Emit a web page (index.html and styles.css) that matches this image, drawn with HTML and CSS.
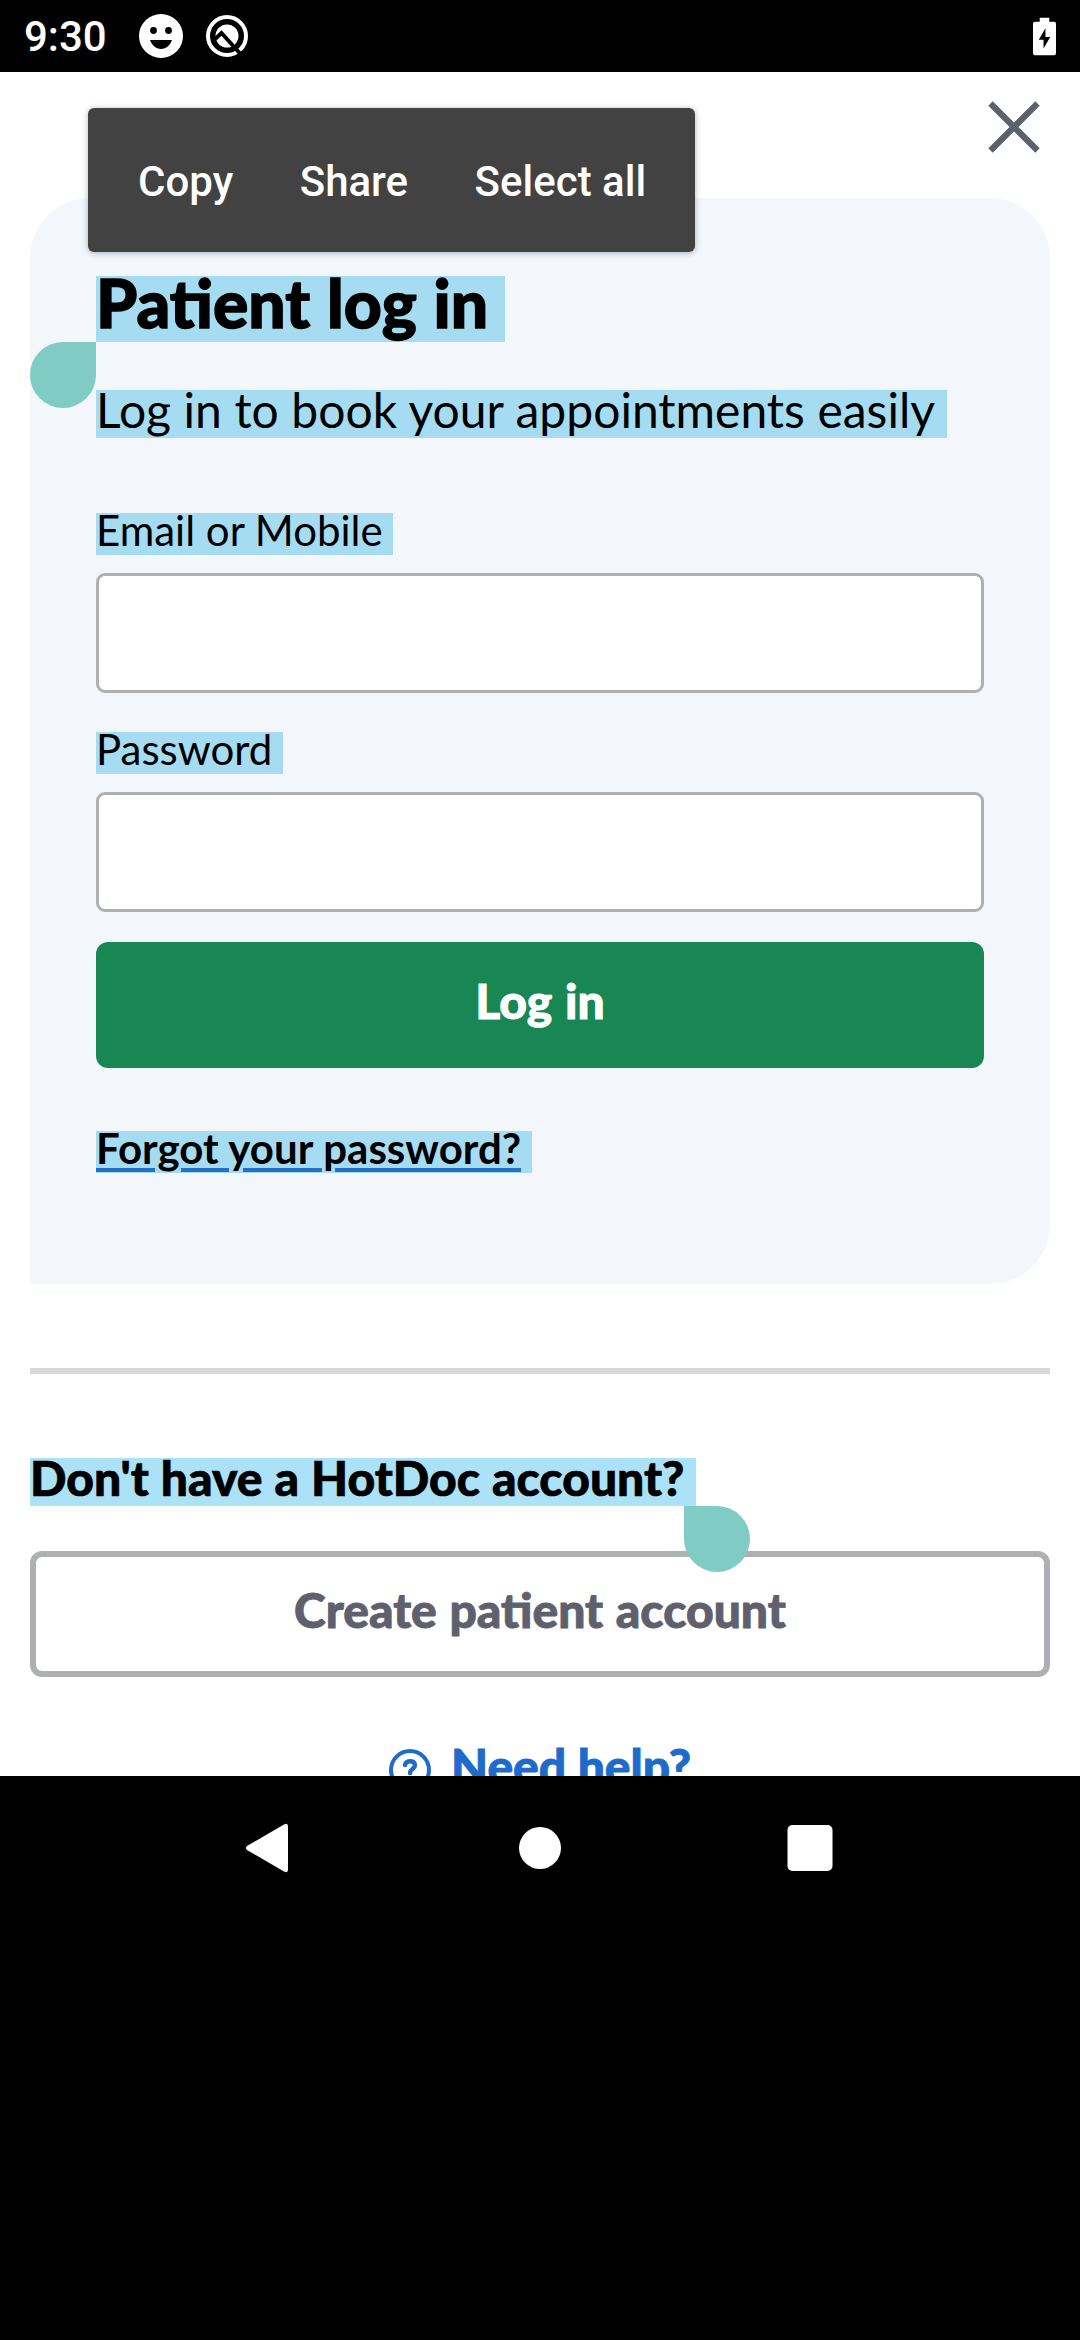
FILE: index.html
```html
<!DOCTYPE html>
<html lang="en">
<head>
<meta charset="utf-8">
<title>HotDoc – Patient log in</title>
<link rel="stylesheet" href="styles.css">
</head>
<body>
<header class="status-bar">
  <span class="clock">9:30</span>
  <svg class="smiley" viewBox="0 0 44 44"><circle cx="22" cy="22" r="22" fill="#fff"/><circle cx="14.500" cy="16.500" r="3.400"/><circle cx="29.500" cy="16.500" r="3.400"/><path d="M11 26h22c-1.600 5-6 9-11 9s-9.400-4-11-9z"/></svg>
  <svg class="q-icon" viewBox="0 0 44 44"><circle cx="22" cy="22" r="19" fill="none" stroke="#fff" stroke-width="4"/><circle cx="22" cy="22" r="11.500" fill="#fff"/><path d="M9.500 25.500 16.500 19 35.500 40" fill="none" stroke="#000" stroke-width="4"/></svg>
  <svg class="battery" viewBox="0 0 24 39"><path d="M7 0h10v4h5a2 2 0 0 1 2 2v31a2 2 0 0 1-2 2H2a2 2 0 0 1-2-2V6a2 2 0 0 1 2-2h5z" fill="#fff"/><path d="M13 11v9h5L11 32v-9H6z"/></svg>
</header>
<main class="page">
  <div class="top-row">
    <svg class="close" viewBox="0 0 52 52"><path d="M2.500 2.500l47 47M49.500 2.500l-47 47" stroke="#5e616d" stroke-width="6.200"/></svg>
  </div>
  <section class="card">
    <h1 class="title"><span class="selected">Patient log in</span><i class="handle handle-start"></i></h1>
    <p class="subtitle"><span class="selected">Log in to book your appointments easily</span></p>
    <label class="label"><span class="selected">Email or Mobile</span></label>
    <input class="field" type="text">
    <label class="label"><span class="selected">Password</span></label>
    <input class="field" type="password">
    <button class="button primary">Log in</button>
    <a class="forgot"><span class="selected"><span class="underlined">Forgot your password?</span></span></a>
  </section>
  <hr class="divider">
  <p class="question"><span class="selected">Don't have a HotDoc account?<i class="handle handle-end"></i></span></p>
  <button class="button outline">Create patient account</button>
  <a class="help">
    <svg class="help-icon" viewBox="0 0 42 42" fill="none" stroke="#1f6bcb"><circle cx="21" cy="21" r="19" stroke-width="4"/><path d="M16 16c.5-5 10-5 10 0 0 4-5 4-5 8" stroke-width="4.500" stroke-linecap="round"/><circle cx="21" cy="30" r="1" stroke-width="3"/></svg>
    <span>Need help?</span>
  </a>
</main>
<nav class="nav-bar">
  <svg viewBox="0 0 60 60"><path d="M7 28 44 6.500q4-2 4 2v43q0 4-4 2L7 32q-2-2 0-4z" fill="#fff"/></svg>
  <svg viewBox="0 0 60 60"><circle cx="30" cy="30" r="21" fill="#fff"/></svg>
  <svg viewBox="0 0 60 60"><rect x="7.500" y="7" width="45" height="46" rx="5" fill="#fff"/></svg>
</nav>
<div class="menu">
  <span>Copy</span><span>Share</span><span>Select all</span>
</div>
</body>
</html>
```
FILE: styles.css
```css
* { box-sizing: border-box; }

body {
  position: relative;
  width: 1080px;
  height: 2340px;
  margin: 0;
  overflow: hidden;
  background: #000;
  color: #000;
  font-family: Lato, sans-serif;
}

.status-bar {
  display: flex;
  align-items: center;
  height: 72px;
  padding: 0 24px;
}
.clock {
  width: 115px;
  color: #fff;
  font: 500 42px/72px Roboto, sans-serif;
  padding-top: 2px;
}
.smiley { width: 44px; height: 44px; }
.q-icon { width: 44px; height: 44px; margin-left: 22px; }
.battery { width: 23px; height: 39px; margin-left: auto; }

.page {
  display: flex;
  flex-direction: column;
  height: 1704px;
  padding: 0 30px;
  overflow: hidden;
  background: #fff;
}
.top-row {
  display: flex;
  flex: none;
  justify-content: flex-end;
  height: 126px;
  padding: 29px 10px 0 0;
}
.close { width: 52px; height: 52px; }

.card {
  display: flex;
  flex-direction: column;
  flex: none;
  height: 1086px;
  padding: 78px 66px 0;
  border-radius: 60px 60px 60px 0;
  background: #f3f7fc;
}

/* Selected runs are one em tall with the text sitting slightly high */
.selected {
  display: block;
  width: max-content;
  height: 1em;
  padding-right: .25em;
  background: #a6dcf2;
  line-height: .82em;
  white-space: nowrap;
}
.title, .subtitle, .question { margin: 0; }
.title {
  position: relative;
  height: 114px;
  font-size: 66px;
  font-weight: 900;
  line-height: 1;
  word-spacing: 1.2px;
  -webkit-text-stroke: 1.4px #000;
}
.subtitle { height: 123px; font-size: 48px; word-spacing: .3px; }
.label { height: 60px; font-size: 42px; }

.handle {
  position: absolute;
  width: 66px;
  height: 66px;
  background: #80cbc4;
}
.handle-start { top: 66px; left: -66px; border-radius: 33px 0 33px 33px; }
.handle-end { top: 48px; right: -54px; border-radius: 0 33px 33px 33px; }

.field {
  width: 100%;
  height: 120px;
  margin: 0 0 39px;
  border: 3px solid #aeb0b4;
  border-radius: 9px;
  background: #fff;
}
.button {
  flex: none;
  width: 100%;
  height: 126px;
  padding: 0 0 8px;
  border: 0;
  border-radius: 12px;
  font: 900 48px/1 Lato, sans-serif;
  word-spacing: 1.2px;
  -webkit-text-stroke: .9px currentColor;
}
.primary { margin-top: -9px; background: #198754; color: #fff; }

.forgot { margin-top: 63px; font-size: 42px; font-weight: 700; word-spacing: .6px; }
.underlined {
  text-decoration: underline;
  text-decoration-color: #2470c8;
  text-decoration-thickness: 4px;
  text-underline-offset: 4px;
}

.divider {
  flex: none;
  width: 100%;
  height: 6px;
  margin: 84px 0;
  border: 0;
  background: #d8d8d8;
}
.question {
  flex: none;
  height: 93px;
  font-size: 48px;
  font-weight: 900;
  word-spacing: .6px;
  -webkit-text-stroke: .7px #000;
}
.question .selected { position: relative; background: #abe2f7; }
.outline { border: 6px solid #aeb0b4; background: #fff; color: #5e616d; }

.help {
  display: flex;
  flex: none;
  justify-content: center;
  gap: 20px;
  margin-top: 72px;
  color: #1f6bcb;
  font-size: 48px;
  font-weight: 900;
  line-height: 34px;
  -webkit-text-stroke: .9px #1f6bcb;
}
.help-icon { width: 42px; height: 42px; }

.nav-bar {
  display: flex;
  justify-content: center;
  gap: 210px;
  padding-top: 42px;
}
.nav-bar svg { width: 60px; height: 60px; }

.menu {
  position: absolute;
  top: 108px;
  left: 88px;
  display: flex;
  gap: 66.5px;
  width: 607px;
  height: 144px;
  padding: 0 50px;
  border-radius: 6px;
  background: #424242;
  box-shadow: 0 1px 6px rgba(0, 0, 0, .3);
  color: #fff;
  font: 500 42px/148px Roboto, sans-serif;
  white-space: nowrap;
}
```
